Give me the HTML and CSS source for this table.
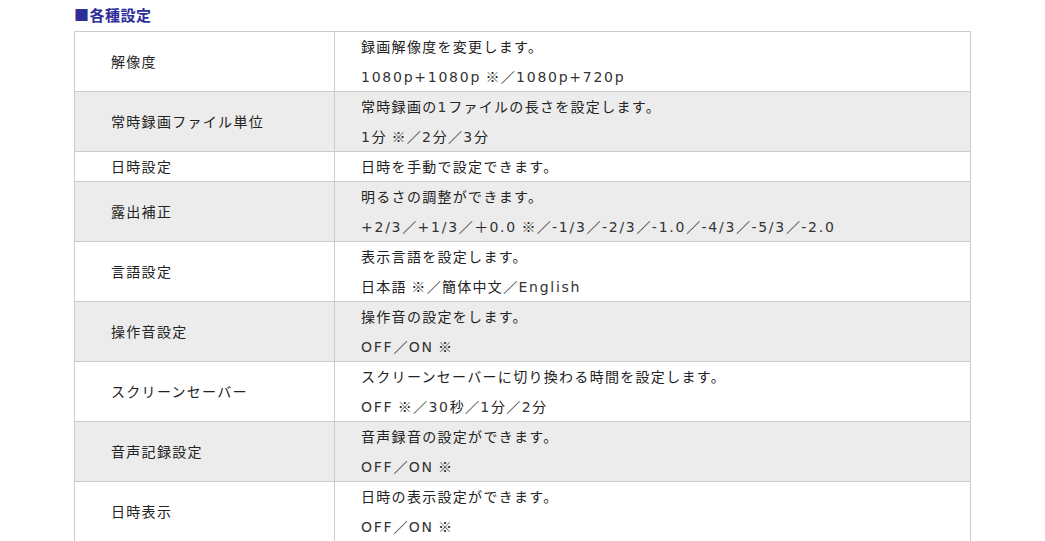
FILE: index.html
```html
<!DOCTYPE html>
<html lang="ja">
<head>
    <meta charset="UTF-8">
    <title>各種設定</title>
    <link rel="stylesheet" href="styles.css">
</head>
<body>
<h3 class="title">■各種設定</h3>
<table class="spec">
    <tr>
        <th>解像度</th>
        <td>録画解像度を変更します。<br><span class="en">1080p+1080p</span> ※／<span class="en">1080p+720p</span></td>
    </tr>
    <tr class="alt">
        <th>常時録画ファイル単位</th>
        <td>常時録画の<span class="en">1</span>ファイルの長さを設定します。<br><span class="en">1</span>分 ※／<span class="en">2</span>分／<span class="en">3</span>分</td>
    </tr>
    <tr class="single">
        <th>日時設定</th>
        <td>日時を手動で設定できます。</td>
    </tr>
    <tr class="alt">
        <th>露出補正</th>
        <td>明るさの調整ができます。<br><span class="en">+2/3</span>／<span class="en">+1/3</span>／＋<span class="en">0.0</span> ※／<span class="en">-1/3</span>／<span class="en">-2/3</span>／<span class="en">-1.0</span>／<span class="en">-4/3</span>／<span class="en">-5/3</span>／<span class="en">-2.0</span></td>
    </tr>
    <tr>
        <th>言語設定</th>
        <td>表示言語を設定します。<br>日本語 ※／簡体中文／<span class="en">English</span></td>
    </tr>
    <tr class="alt">
        <th>操作音設定</th>
        <td>操作音の設定をします。<br><span class="en">OFF</span>／<span class="en">ON</span> ※</td>
    </tr>
    <tr>
        <th>スクリーンセーバー</th>
        <td>スクリーンセーバーに切り換わる時間を設定します。<br><span class="en">OFF</span> ※／<span class="en">30</span>秒／<span class="en">1</span>分／<span class="en">2</span>分</td>
    </tr>
    <tr class="alt">
        <th>音声記録設定</th>
        <td>音声録音の設定ができます。<br><span class="en">OFF</span>／<span class="en">ON</span> ※</td>
    </tr>
    <tr>
        <th>日時表示</th>
        <td>日時の表示設定ができます。<br><span class="en">OFF</span>／<span class="en">ON</span> ※</td>
    </tr>
</table>
</body>
</html>
```
FILE: styles.css
```css
body{
    margin: 0;
    padding: 0 74px;
    font-family: "Noto Sans CJK JP", "Noto Sans", sans-serif;
    color: #222;
    background-color: #fff;
}
.title{
    margin: 0;
    height: 31px;
    line-height: 30px;
    font-size: 15px;
    font-weight: bold;
    color: #2e2e99;
    letter-spacing: 0.5px;
}
.spec{
    width: 897px;
    border-collapse: collapse;
    font-size: 14px;
    letter-spacing: 1.3px;
}
.spec th,
.spec td{
    border: 1px solid #cccccc;
    padding: 0;
    line-height: 29.5px;
    font-weight: normal;
    text-align: left;
    vertical-align: middle;
}
.spec th{
    width: 223px;
    padding-left: 36px;
}
.spec td{
    padding-left: 26px;
}
.spec .single th,
.spec .single td{
    line-height: 29px;
}
.spec .alt{
    background-color: #ececec;
}
/* latin runs: wide figures */
.en{
    font-family: "DejaVu Sans", sans-serif;
    font-size: 14px;
    line-height: 1;
    letter-spacing: 1.75px;
    color: #333;
}
```
